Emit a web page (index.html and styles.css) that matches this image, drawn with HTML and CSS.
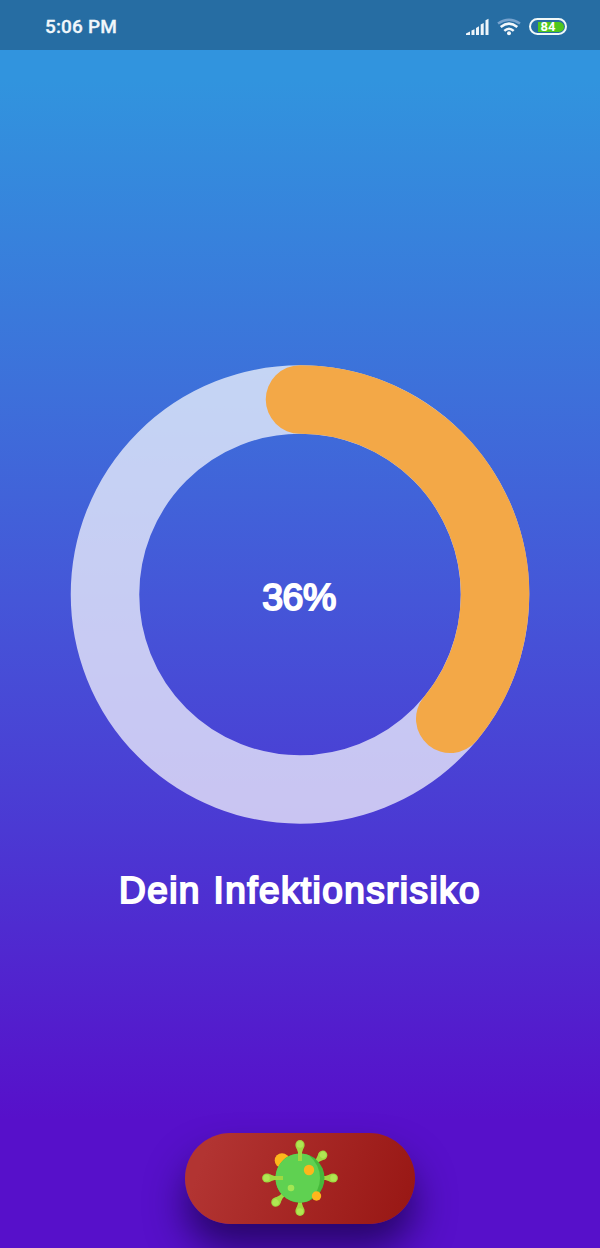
FILE: index.html
```html
<!DOCTYPE html>
<html lang="de">
<head>
<meta charset="utf-8">
<title>Infektionsrisiko</title>
<link rel="stylesheet" href="styles.css">
</head>
<body>
<div class="app">
  <header class="status">
    <span class="time">5:06 PM</span>
    <svg class="signal" width="24" height="18" viewBox="0 0 24 18" fill="#eef5fa">
      <path d="M0 17v-1.500l4-2v3.500zM5.500 12.500l3-1.200V17h-3zM10 10l3-1.700V17h-3zM14.700 6.500l3-1.500V17h-3zM19.500 2.300l3-1.500V17h-3z"/>
    </svg>
    <svg class="wifi" width="24" height="18" viewBox="0 0 24 18" fill="none" stroke="#f3f8fb" stroke-width="2.500">
      <path d="M1 5.500Q12-2 23 5.500" stroke="#77a3ce"/>
      <path d="M3.700 9Q12 2.300 20.300 9"/>
      <path d="M7.300 12.900Q12 8.600 16.700 12.900"/>
      <circle cx="12" cy="15.300" r="2" fill="#f3f8fb" stroke="none"/>
    </svg>
    <div class="battery"><div class="charge">84</div></div>
  </header>
  <main class="content">
    <div class="gauge">
      <svg class="ring" viewBox="0 0 460 460" fill="none" stroke-width="68.500">
        <circle cx="230" cy="230.500" r="195" stroke="#fff" stroke-opacity=".7"/>
        <path d="M230 35.500A195 195 0 0 1 380.250 354.800" stroke="#f3a847" stroke-linecap="round"/>
      </svg>
      <div class="percent">36%</div>
    </div>
    <h1 class="title">Dein Infektionsrisiko</h1>
  </main>
  <button class="action" aria-label="Virus">
    <svg width="76" height="77" viewBox="0 0 76 77">
      <defs>
        <g id="spike">
          <path d="M36 21V12.500L34.300 7.500H41.700L40 12.500V21z" fill="#9fd941"/>
          <ellipse cx="38" cy="5" rx="4.600" ry="4.900" fill="#9fd941"/>
          <circle cx="38" cy="4.500" r="3.200" fill="#b0e753"/>
        </g>
      </defs>
      <circle cx="20" cy="20.500" r="7.300" fill="#feb61b"/>
      <use href="#spike" transform="rotate(45 38 38) translate(0 1)"/>
      <use href="#spike" transform="rotate(90 38 38)"/>
      <use href="#spike" transform="rotate(180 38 38)"/>
      <use href="#spike" transform="rotate(225 38 38) translate(0 -1)"/>
      <circle cx="38" cy="38" r="24.500" fill="#46b93b"/>
      <path d="M47 15.200A24.500 24.500 0 1 0 47 60.800Q58 51 58 38T47 15.200z" fill="#5fd151"/>
      <use href="#spike"/>
      <use href="#spike" transform="rotate(270 38 38)"/>
      <circle cx="47" cy="30" r="5.200" fill="#feb61b"/>
      <circle cx="54.500" cy="56" r="4.700" fill="#feb61b"/>
      <circle cx="29" cy="48" r="3.300" fill="#a3e653"/>
    </svg>
  </button>
</div>
</body>
</html>
```
FILE: styles.css
```css
* { box-sizing: border-box; }
body { margin: 0; }
.app {
  width: 600px;
  height: 1248px;
  overflow: hidden;
  display: flex;
  flex-direction: column;
  align-items: center;
  color: #fff;
  font-family: "Liberation Sans", Arial, sans-serif;
  background: linear-gradient(#3194de 80px, #3d70da 390px, #4556d8 600px, #4b39d3 830px, #5710ca 1120px);
}
.status {
  width: 100%;
  height: 50px;
  flex: none;
  display: flex;
  align-items: center;
  padding: 3px 33px 0 45px;
  background: #266da3;
}
.time {
  font: 500 19px Roboto, sans-serif;
  letter-spacing: .15px;
  margin-right: auto;
  color: #f1f7fb;
  -webkit-text-stroke: .3px #f1f7fb;
}
.wifi { margin: 0 8px 0 7px; }
.battery {
  width: 38px;
  height: 17px;
  padding: 1.500px 1.500px 1px;
  border: 2px solid #f0f8f8;
  border-radius: 9px;
}
.charge {
  height: 10px;
  margin-left: 5px;
  border-radius: 0 5px 5px 0;
  background: #4fc71c;
  font: bold 13px/10px Roboto, sans-serif;
  padding-left: 3px;
}
.content {
  display: flex;
  flex-direction: column;
  align-items: center;
  padding-top: 314px;
}
.gauge { display: grid; place-items: center; width: 460px; height: 460px; }
.ring, .percent { grid-area: 1 / 1; }
.ring { width: 460px; height: 460px; }
.percent {
  font-size: 37.500px;
  font-weight: normal;
  -webkit-text-stroke: 2px #fff;
  line-height: 44px;
  letter-spacing: -.5px;
  padding: 6px 2px 0 0;
}
.title {
  margin: 43px 0 0;
  font-size: 37px;
  line-height: 48px;
  font-weight: normal;
  -webkit-text-stroke: 2px #fff;
  letter-spacing: 1.420px;
  word-spacing: 1px;
  white-space: nowrap;
}
.action {
  width: 230px;
  height: 91px;
  margin: auto 0 24.500px;
  display: grid;
  place-items: center;
  padding: 0;
  border: 0;
  border-radius: 46px;
  background: linear-gradient(110deg, #b23432 10%, #991815 95%);
  box-shadow: 0 25px 38px 0 rgba(15, 0, 55, .65);
}
```
